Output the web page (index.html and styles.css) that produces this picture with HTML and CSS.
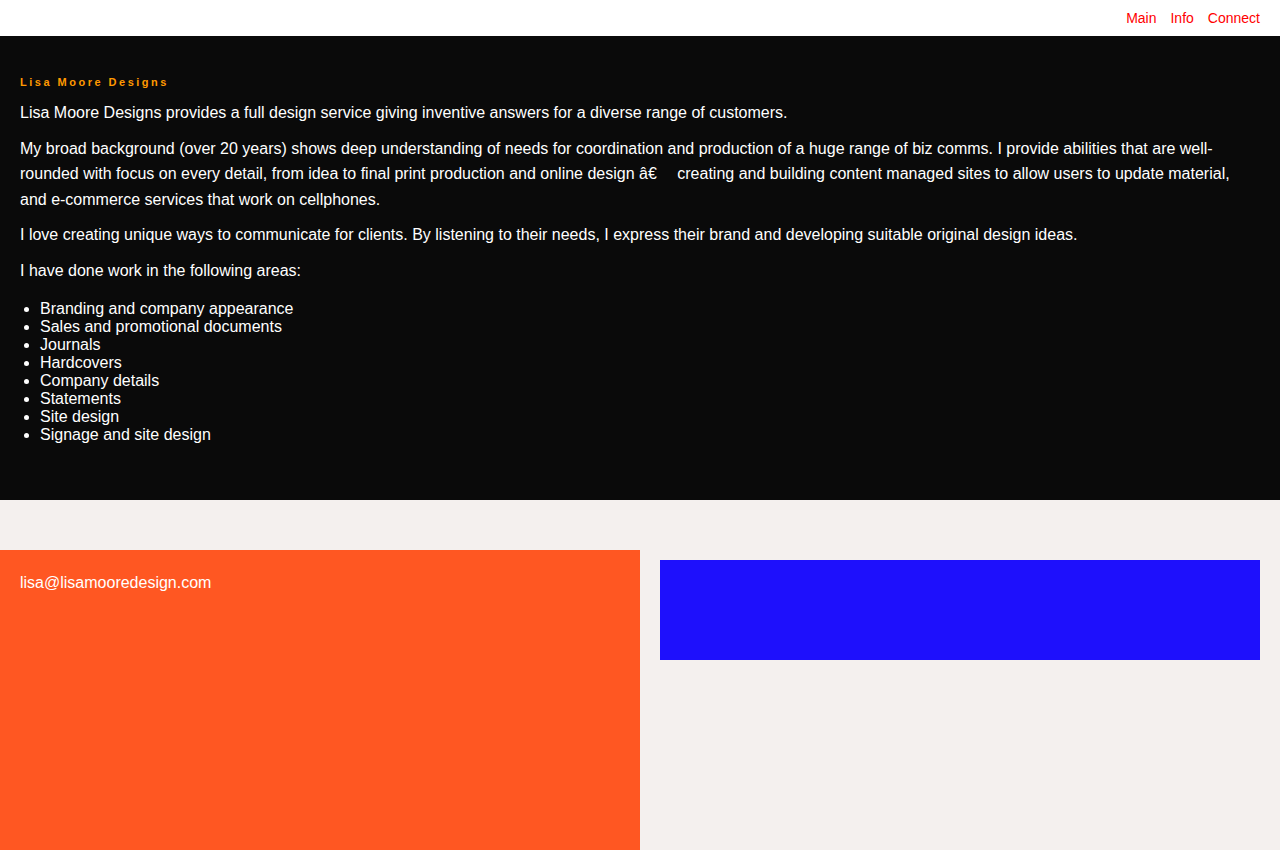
FILE: index.html
```html
<!DOCTYPE html>
<html lang="en">
<head>
<meta charset="utf-8">
<title>Lisa Moore Designs</title>
<link rel="stylesheet" href="styles.css">
</head>
<body>
<header class="topbar">
  <nav class="nav">
    <a href="#" class="nav-link">Main</a>
    <a href="#" class="nav-link">Info</a>
    <a href="#" class="nav-link">Connect</a>
  </nav>
</header>
<section class="about">
  <h1 class="brand">Lisa Moore Designs</h1>
  <p class="text">Lisa Moore Designs provides a full design service giving inventive answers for a diverse range of customers.</p>
  <p class="text">My broad background (over 20 years) shows deep understanding of needs for coordination and production of a huge range of biz comms. I provide abilities that are well-rounded with focus on every detail, from idea to final print production and online design â€&emsp; creating and building content managed sites to allow users to update material, and e-commerce services that work on cellphones.</p>
  <p class="text">I love creating unique ways to communicate for clients. By listening to their needs, I express their brand and developing suitable original design ideas.</p>
  <p class="text">I have done work in the following areas:</p>
  <ul class="areas">
    <li>Branding and company appearance</li>
    <li>Sales and promotional documents</li>
    <li>Journals</li>
    <li>Hardcovers</li>
    <li>Company details</li>
    <li>Statements</li>
    <li>Site design</li>
    <li>Signage and site design</li>
  </ul>
</section>
<section class="contact">
  <div class="contact-card">lisa@lisamooredesign.com</div>
  <div class="contact-side">
    <div class="blue-box"></div>
  </div>
</section>
</body>
</html>
```
FILE: styles.css
```css
* { box-sizing: border-box; }
html, body {
  margin: 0;
  padding: 0;
}
body {
  background: #f4f0ee;
  font-family: "Liberation Sans", Arial, sans-serif;
  font-size: 16px;
  color: #fff;
  overflow: hidden;
  height: 850px;
}
.topbar {
  background: #fff;
  height: 36px;
  display: flex;
  justify-content: flex-end;
  align-items: center;
  padding: 0 20px;
}
.nav {
  display: flex;
  gap: 14px;
}
.nav-link {
  color: #ff0000;
  font-size: 14px;
  text-decoration: none;
  line-height: 16px;
}
.about {
  background: #0a0a0a;
  padding: 40px 20px 40px;
}
.brand {
  margin: 0 0 11px;
  font-size: 11px;
  line-height: 13px;
  font-weight: bold;
  letter-spacing: 2.5px;
  color: #ff9900;
}
.text {
  margin: 0 0 10px;
  line-height: 1.6;
  padding-right: 10px;
}
.areas {
  margin: 16px 0;
  padding-left: 20px;
  line-height: 18px;
}
.contact {
  margin-top: 50px;
  display: grid;
  grid-template-columns: 640px 640px;
}
.contact-card {
  background: #ff5722;
  padding: 20px;
  line-height: 1.6;
  min-height: 320px;
}
.contact-side {
  padding: 10px 20px;
}
.blue-box {
  background: #1e10fc;
  height: 100px;
}
```
